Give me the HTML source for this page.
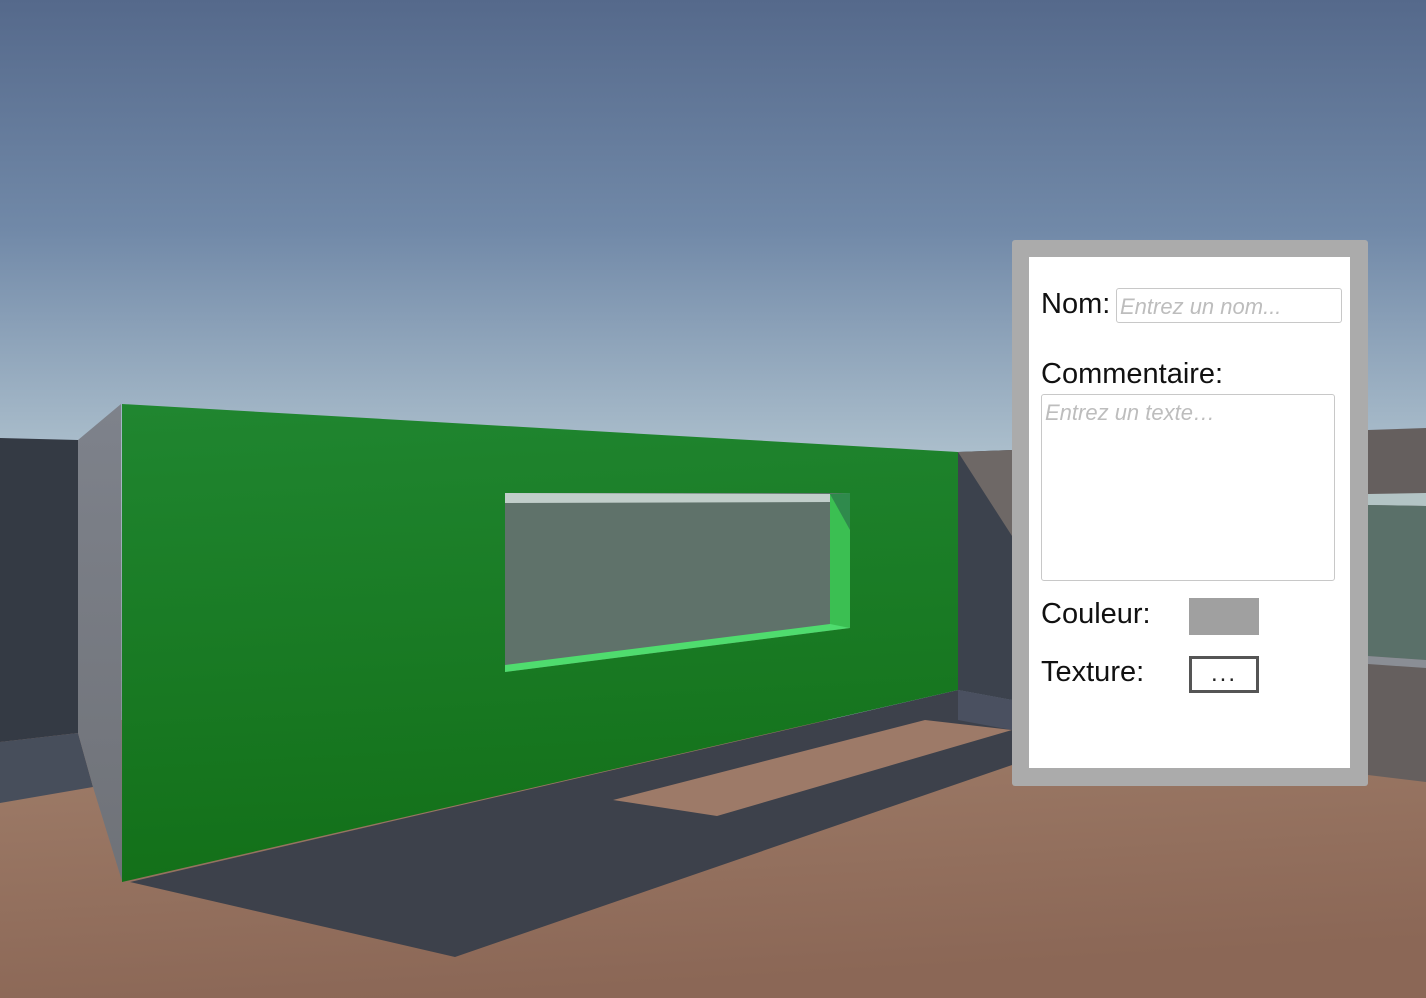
<!DOCTYPE html>
<html><head><meta charset="utf-8"><style>
html,body{margin:0;padding:0;width:1426px;height:998px;overflow:hidden;font-family:"Liberation Sans",sans-serif}
svg{position:absolute;left:0;top:0}
.panel{position:absolute;left:1012px;top:240px;width:356px;height:546px;background:#ababab;border-radius:3px}
.inner{position:absolute;left:17px;top:17px;width:321px;height:511px;background:#fff}
.lbl{position:absolute;font-size:29px;color:#111;line-height:1}
.ph{font-style:italic;color:#bdbdbd;font-size:22px;position:absolute;white-space:nowrap}
</style></head><body>
<svg width="1426" height="998" viewBox="0 0 1426 998">
<defs>
<linearGradient id="sky" gradientUnits="userSpaceOnUse" x1="0" y1="0" x2="0" y2="460"><stop offset="0" stop-color="#55698b"/><stop offset="0.5" stop-color="#7189a8"/><stop offset="1" stop-color="#adc0cd"/></linearGradient>
<linearGradient id="floor" x1="0" y1="0" x2="0.3" y2="1"><stop offset="0" stop-color="#a07e6a"/><stop offset="1" stop-color="#8b6756"/></linearGradient>
<linearGradient id="green" x1="0" y1="0" x2="0.1" y2="1"><stop offset="0" stop-color="#208630"/><stop offset="1" stop-color="#137019"/></linearGradient>
<linearGradient id="side" x1="0" y1="0" x2="0" y2="1"><stop offset="0" stop-color="#7e828b"/><stop offset="1" stop-color="#6f7278"/></linearGradient>
</defs>
<rect width="1426" height="998" fill="url(#sky)"/>
<rect y="720" width="1426" height="278" fill="url(#floor)"/>
<polygon points="0,438 78,440 78,733 0,742" fill="#343a44"/>
<polygon points="0,742 78,733 93,787 0,803" fill="#474e5b"/>
<polygon points="958,452 1012,450 1012,700 958,690" fill="#3c424d"/>
<polygon points="958,452 1012,450 1012,536" fill="#6e6866"/>
<polygon points="1368,430 1426,428 1426,782 1368,775" fill="#655f5e"/>
<polygon points="1368,494 1426,493 1426,506 1368,505" fill="#b3c4c5"/>
<polygon points="1368,505 1426,506 1426,660 1368,656" fill="#5a7069"/>
<polygon points="1368,656 1426,660 1426,668 1368,664" fill="#8a8e95"/>
<polygon points="130,882 958,690 1012,700 1012,765 455,957" fill="#3d414b"/>
<polygon points="958,690 1012,700 1012,730 958,720" fill="#4a5060"/>
<polygon points="613,800 925,720 1012,730 717,816" fill="#9d7a68"/>
<polygon points="78,440 121,404 122,881 93,787 78,733" fill="url(#side)"/>
<polygon points="122,404 958,452 958,690 122,882" fill="url(#green)"/>
<polygon points="505,493 850,493 850,628 505,672" fill="#5f726a"/>
<polygon points="505,493 830,494 830,502 505,503" fill="#c1ceca"/>
<polygon points="830,494 850,493 850,628 830,625" fill="#3bbf52"/>
<polygon points="830,494 850,493 850,530" fill="#2f8a4c"/>
<polygon points="505,665 830,624 850,628 505,672" fill="#4fdc6e"/>
</svg>
<div class="panel"><div class="inner">
<div class="lbl" style="left:12px;top:33px">Nom:</div>
<div style="position:absolute;left:87px;top:31px;width:224px;height:33px;border:1px solid #c8c8c8;border-radius:3px"></div>
<div class="ph" style="left:91px;top:37px">Entrez un nom...</div>
<div class="lbl" style="left:12px;top:103px">Commentaire:</div>
<div style="position:absolute;left:12px;top:137px;width:292px;height:185px;border:1px solid #c8c8c8;border-radius:3px"></div>
<div class="ph" style="left:16px;top:143px">Entrez un texte…</div>
<div class="lbl" style="left:12px;top:343px">Couleur:</div>
<div style="position:absolute;left:160px;top:341px;width:70px;height:37px;background:#a0a0a0"></div>
<div class="lbl" style="left:12px;top:401px">Texture:</div>
<div style="position:absolute;left:160px;top:399px;width:64px;height:31px;border:3px solid #555;text-align:center;font-size:24px;line-height:30px;letter-spacing:2px;color:#222">...</div>
</div></div>
</body></html>
